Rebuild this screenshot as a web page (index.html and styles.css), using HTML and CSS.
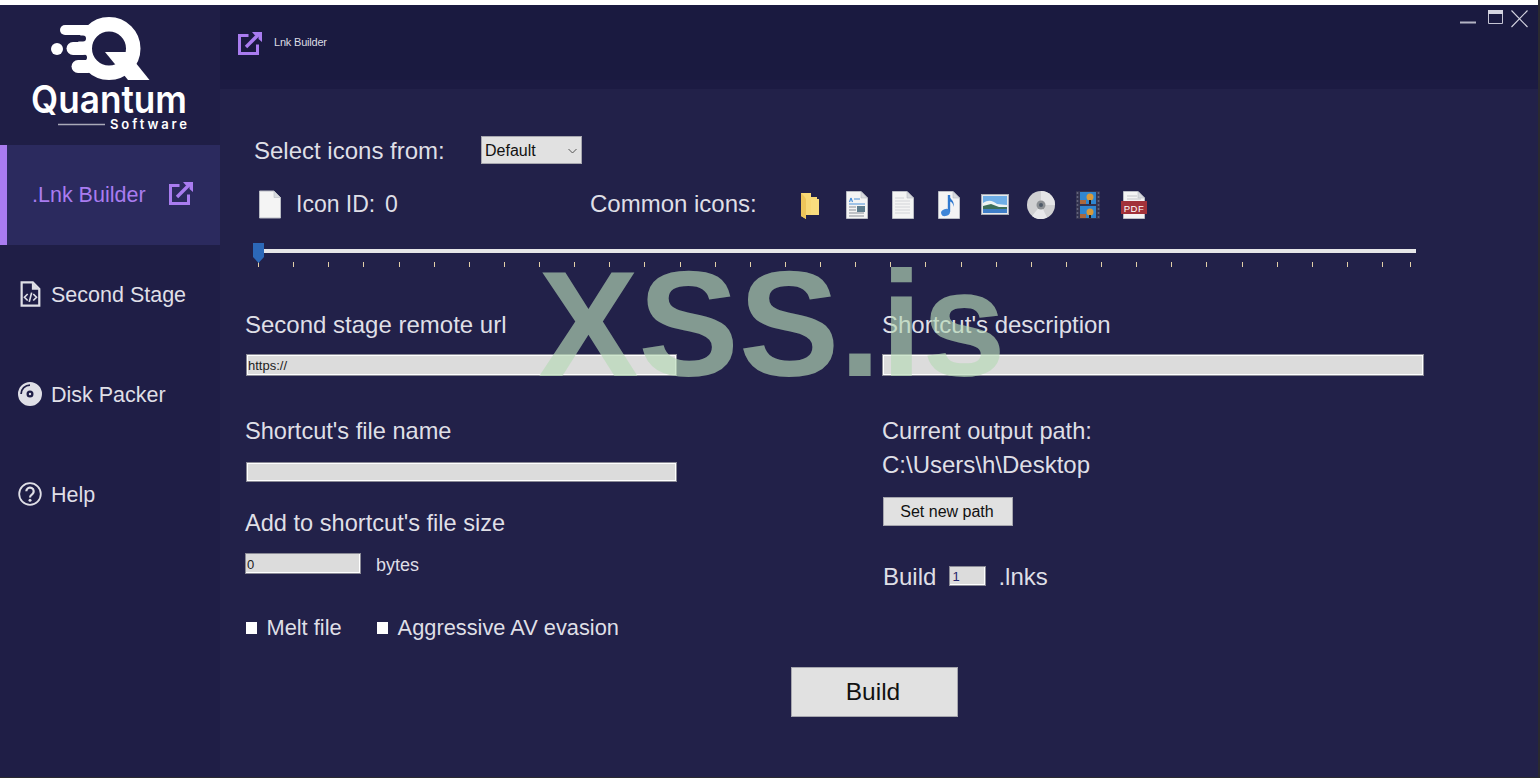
FILE: index.html
```html
<!DOCTYPE html>
<html lang="en">
<head>
<meta charset="utf-8">
<title>Quantum Software - Lnk Builder</title>
<link rel="stylesheet" href="styles.css">
</head>
<body>
<svg class="defs" width="0" height="0" aria-hidden="true">
  <symbol id="link" viewBox="0 0 24 24">
    <path d="M10.500 4.500H1.500V22.500H19.500V13.500" fill="none" stroke="currentColor" stroke-width="3"/>
    <path d="M8 16L21 3" fill="none" stroke="currentColor" stroke-width="3.400"/>
    <path d="M14 1H24V11L20.500 8V4.500H17Z" fill="currentColor"/>
  </symbol>
  <symbol id="page" viewBox="0 0 22 28">
    <path d="M.5.500H15L21.500 7V27.500H.5Z" fill="#f4f4f4" stroke="#b9bcc4"/>
    <path d="M15 .5V7H21.500Z" fill="#d8dade" stroke="#b9bcc4" stroke-width=".6"/>
  </symbol>
</svg>
<div class="window">
  <aside class="sidebar">
    <div class="logo">
      <svg width="220" height="140" viewBox="0 0 220 140">
        <circle cx="57" cy="44" r="6" fill="#fff"/>
        <circle cx="109" cy="43.500" r="24.250" fill="none" stroke="#fff" stroke-width="14.500"/>
        <path d="M105 47H127L149.500 75H128Z" fill="#fff"/>
        <g stroke="#1f1e46" stroke-width="6" stroke-linecap="round">
          <path d="M66 33.500H83"/>
          <path d="M66 52.500H84"/>
        </g>
        <g stroke="#fff" stroke-linecap="round">
          <path d="M65 25H88" stroke-width="10"/>
          <path d="M73 43.500H83" stroke-width="13"/>
          <path d="M78 61.500H88" stroke-width="13"/>
        </g>
        <text class="logo-name" x="31" y="108" textLength="156" lengthAdjust="spacingAndGlyphs">Quantum</text>
        <path d="M58 119.500H105" stroke="#a9a9b8" stroke-width="1.300"/>
        <text class="logo-sub" x="110" y="124" textLength="77">Software</text>
      </svg>
    </div>
    <nav class="nav">
      <a class="nav-item active">
        <span class="nav-label">.Lnk Builder</span>
        <svg class="nav-link-icon"><use href="#link"/></svg>
      </a>
      <a class="nav-item">
        <svg class="nav-icon" viewBox="0 0 24 28">
          <path d="M3 1.500H15L22 8.500V26.500H3Z" fill="none" stroke="currentColor" stroke-width="2.400"/>
          <path d="M14 1.500V9.500H22Z" fill="currentColor"/>
          <path d="M9.500 14L6 17.500L9.500 21M15.500 14L19 17.500L15.500 21M13.800 12.500L11.200 22.500" fill="none" stroke="currentColor" stroke-width="1.800"/>
        </svg>
        <span class="nav-text">Second Stage</span>
      </a>
      <a class="nav-item">
        <svg class="nav-icon" viewBox="0 0 24 24">
          <path fill-rule="evenodd" d="M12 0A12 12 0 1 1 12 24A12 12 0 1 1 12 0ZM12 8.500A3.500 3.500 0 1 0 12 15.500A3.500 3.500 0 1 0 12 8.500ZM12 10.800A1.200 1.200 0 1 1 12 13.200A1.200 1.200 0 1 1 12 10.800ZM4 12A8 8 0 0 1 12 4V2.200A9.800 9.800 0 0 0 2.200 12Z" fill="currentColor"/>
        </svg>
        <span class="nav-text">Disk Packer</span>
      </a>
      <a class="nav-item">
        <svg class="nav-icon" viewBox="0 0 24 24">
          <circle cx="12" cy="12" r="10.800" fill="none" stroke="currentColor" stroke-width="1.800"/>
          <path d="M8.300 9.300A3.700 3.700 0 1 1 14.200 12.300C12.800 13.300 12 13.800 12 15.500" fill="none" stroke="currentColor" stroke-width="2.200"/>
          <circle cx="12" cy="18.300" r="1.500" fill="currentColor"/>
        </svg>
        <span class="nav-text">Help</span>
      </a>
    </nav>
  </aside>
  <div class="content">
    <header class="header">
      <div class="titlebar">
        <svg class="title-icon"><use href="#link"/></svg>
        <span class="title-text">Lnk Builder</span>
        <div class="controls">
          <svg width="78" height="24" viewBox="0 0 78 24">
            <path d="M0 17.500H16" stroke="#b4b4c4" stroke-width="2"/>
            <path d="M28.500 5.500H42.500V18.500H28.500Z" fill="none" stroke="#c4c4d4"/>
            <path d="M28 5H43V9H28Z" fill="#d4d4e0"/>
            <path d="M51.500 5.500L67.500 22M67.500 5.500L51.500 22" stroke="#d4d4e0" stroke-width="1.100"/>
          </svg>
        </div>
      </div>
      <div class="header-strip"></div>
    </header>
    <main class="main">
      <div class="select-row">
        <span class="label select-label">Select icons from:</span>
        <div class="select-wrap">
          <select class="select"><option>Default</option></select>
          <svg class="chevron" width="9" height="6" viewBox="0 0 9 6"><path d="M.5 1L4.500 5L8.500 1" fill="none" stroke="#555" stroke-width="1"/></svg>
        </div>
      </div>
      <div class="icon-row">
        <svg class="current-icon"><use href="#page"/></svg>
        <span class="label id-label">Icon ID:</span>
        <span class="label id-value">0</span>
        <span class="label common-label">Common icons:</span>
        <div class="common-icons">
          <svg class="common folder" viewBox="0 0 28 28">
            <path d="M5 2H15V6H21V23H23V24H10V28L5 25Z" fill="#f8d876"/>
            <path d="M5 2V25L10 28V8L8 5Z" fill="#eec55a"/>
            <path d="M15 8H23V24H15Z" fill="#f9dc7e"/>
          </svg>
          <svg class="common" viewBox="0 0 28 28">
            <use href="#page" x="3" width="22" height="28"/>
            <path d="M8 7L6.500 11M8 7L9.500 11" stroke="#4a8fd8" stroke-width="1.200" fill="none"/>
            <path d="M11 8H17M6 13H22" stroke="#4a8fd8" stroke-width="1.200"/>
            <path d="M6 16H13M6 19H13M6 22H21M6 25H21" stroke="#8a8f98"/>
            <rect x="14" y="15" width="8" height="6" fill="#5e7d8e"/>
          </svg>
          <svg class="common" viewBox="0 0 28 28">
            <use href="#page" x="3" width="22" height="28"/>
            <path d="M6 7H15M6 10H21M6 13H21M6 16H21M6 19H21M6 22H21" stroke="#d2d4d8"/>
          </svg>
          <svg class="common" viewBox="0 0 28 28">
            <use href="#page" x="3" width="22" height="28"/>
            <path d="M14 4V21" stroke="#2f79cf" stroke-width="2.400"/>
            <ellipse cx="10.500" cy="21.500" rx="4.500" ry="3.500" fill="#3f86d8" transform="rotate(-20 10.500 21.500)"/>
            <path d="M14 4C15 9 20 9 18.500 16C18 11 16 11 14 10Z" fill="#2f79cf"/>
          </svg>
          <svg class="common" viewBox="0 0 28 28">
            <rect x=".5" y="3.500" width="27" height="20" fill="#e8e8ec" stroke="#a8acb4"/>
            <rect x="2" y="5" width="24" height="17" fill="#6faee6"/>
            <path d="M2 12C8 8 12 10 16 13L26 14V17H2Z" fill="#eef3f4"/>
            <path d="M2 15L10 13L18 16H26V18H2Z" fill="#3d6f5a"/>
            <rect x="2" y="18" width="24" height="4" fill="#3f7ec8"/>
          </svg>
          <svg class="common" viewBox="0 0 28 28">
            <circle cx="14" cy="14" r="14" fill="#d0d0d2"/>
            <path d="M14 0A14 14 0 0 1 28 14L14 14Z" fill="#e4e4e6"/>
            <path d="M14 14L5 25A14 14 0 0 0 20 26.600Z" fill="#e8e8ea"/>
            <circle cx="14" cy="14" r="4.500" fill="#8d9094"/>
            <circle cx="14" cy="14" r="2" fill="#4e5a68"/>
          </svg>
          <svg class="common" viewBox="0 0 28 28">
            <rect x="2" width="24" height="28" fill="#33334f"/>
            <path d="M3.500 1V28M24.500 1V28" stroke="#63637c" stroke-width="1.600" stroke-dasharray="2 2"/>
            <rect x="6" y="1" width="16" height="12" fill="#2f86d0"/>
            <rect x="6" y="15" width="16" height="12" fill="#2f86d0"/>
            <path d="M6 9H12V13H6ZM6 23H12V27H6Z" fill="#a9683e"/>
            <circle cx="16" cy="6" r="3.500" fill="#d89a3a"/>
            <circle cx="16" cy="21" r="3.500" fill="#d89a3a"/>
            <path d="M16 9V13M16 24V27" stroke="#221a1a" stroke-width="2"/>
          </svg>
          <svg class="common" viewBox="0 0 28 28">
            <use href="#page" x="3" width="22" height="28"/>
            <path d="M7 5H17M7 8H21" stroke="#c4c6ca"/>
            <rect x="1" y="10" width="26" height="13" fill="#a2323a"/>
            <text class="pdf" x="14" y="20.500">PDF</text>
          </svg>
        </div>
      </div>
      <div class="slider">
        <div class="track"></div>
        <div class="thumb"></div>
        <div class="ticks">
          <i></i><i></i><i></i><i></i><i></i><i></i><i></i><i></i><i></i><i></i><i></i><i></i><i></i><i></i><i></i><i></i><i></i>
          <i></i><i></i><i></i><i></i><i></i><i></i><i></i><i></i><i></i><i></i><i></i><i></i><i></i><i></i><i></i><i></i><i></i>
        </div>
      </div>
      <div class="form">
        <div class="col col-left">
          <label class="label">Second stage remote url</label>
          <input class="input field-a" type="text" value="https://">
          <label class="label gap-lg tight">Shortcut's file name</label>
          <input class="input field-b" type="text">
          <label class="label gap-md tight">Add to shortcut's file size</label>
          <div class="bytes-row">
            <input class="input bytes" type="text" value="0">
            <span class="small">bytes</span>
          </div>
          <div class="checks">
            <label class="check"><input class="box" type="checkbox"><span class="check-text">Melt file</span></label>
            <label class="check"><input class="box" type="checkbox"><span class="check-text">Aggressive AV evasion</span></label>
          </div>
        </div>
        <div class="col">
          <label class="label">Shortcut's description</label>
          <input class="input field-c" type="text">
          <span class="label gap-lg tight">Current output path:</span>
          <span class="label gap-sm">C:\Users\h\Desktop</span>
          <button class="btn path-btn" type="button">Set new path</button>
          <div class="count-row">
            <span class="label">Build</span>
            <input class="input count" type="text" value="1">
            <span class="label">.lnks</span>
          </div>
        </div>
      </div>
      <button class="btn build-btn" type="button">Build</button>
    </main>
  </div>
</div>
<div class="watermark">XSS.is</div>
</body>
</html>
```

FILE: styles.css
```css
* {
  box-sizing: border-box;
}

html,
body {
  margin: 0;
  height: 100%;
}

body {
  position: relative;
  overflow: hidden;
  background: #2a2a30;
  font-family: "Liberation Sans", Arial, sans-serif;
  color: #dfdfe6;
}

.defs {
  position: absolute;
}

.window {
  display: flex;
  width: 1538px;
  height: 777px;
  border-top: 5px solid #fff;
}

/* Sidebar */
.sidebar {
  flex: 0 0 220px;
  background: #1f1e46;
}

.logo {
  height: 140px;
}

.logo svg {
  display: block;
}

.logo-name {
  font-family: Inter, "Liberation Sans", sans-serif;
  font-size: 38px;
  font-weight: 600;
  fill: #fff;
}

.logo-sub {
  font-family: Inter, "Liberation Sans", sans-serif;
  font-size: 13px;
  font-weight: 600;
  fill: #fff;
}

.nav {
  display: flex;
  flex-direction: column;
}

.nav-item {
  display: flex;
  align-items: center;
  gap: 9px;
  height: 100px;
  padding: 0 0 3px 18px;
  font-size: 21.500px;
  color: #dfdfe6;
}

.nav-item.active {
  gap: 23px;
  padding-left: 25px;
  padding-bottom: 0;
  background: #2b2a5e;
  border-left: 7px solid #a97cf0;
  color: #a97cf0;
}

.nav-label {
  margin-top: 1px;
}

.nav-text {
  margin-top: 4px;
}

.nav-icon {
  flex: none;
  width: 24px;
  height: 26px;
}

.nav-link-icon {
  flex: none;
  width: 24px;
  height: 24px;
  margin-bottom: 4px;
}

/* Header */
.content {
  flex: 1;
  display: flex;
  flex-direction: column;
  min-width: 0;
  background: #222149;
}

.titlebar {
  display: flex;
  align-items: center;
  height: 75px;
  padding-left: 18px;
  background: #1a1a40;
}

.title-icon {
  width: 24px;
  height: 24px;
  color: #a97cf0;
}

.title-text {
  margin: 0 0 2px 12px;
  font-size: 11px;
  letter-spacing: -0.2px;
  color: #dcdce4;
}

.controls {
  align-self: flex-start;
  display: flex;
  margin-left: auto;
  line-height: 0;
}

.header-strip {
  height: 9px;
  background: #1c1b43;
}

/* Main form */
.main {
  flex: 1;
  display: flex;
  flex-direction: column;
  align-items: flex-start;
  padding-top: 47px;
}

.label {
  display: block;
  font-size: 24px;
  line-height: 26px;
  white-space: nowrap;
  color: #dfdfe6;
}

.label.tight {
  font-size: 23.600px;
}

.select-row {
  display: flex;
  align-items: center;
  padding-left: 34px;
}

.select-label {
  width: 227px;
  padding-top: 2px;
}

.select-wrap {
  position: relative;
  width: 101px;
  height: 28px;
}

.select {
  appearance: none;
  display: block;
  width: 100%;
  height: 100%;
  padding: 0 0 0 3px;
  border: 1px solid #a6a6ae;
  border-radius: 0;
  background: #e1e1e1;
  font: 16px "Liberation Sans", Arial, sans-serif;
  color: #111;
}

.chevron {
  position: absolute;
  top: 12px;
  right: 5px;
}

.icon-row {
  display: flex;
  align-items: center;
  height: 29px;
  margin-top: 26px;
  padding-left: 39px;
}

.current-icon {
  flex: none;
  width: 22px;
  height: 29px;
}

.id-label {
  margin: 0 0 2px 15px;
  width: 89px;
  font-size: 23px;
}

.id-value {
  width: 205px;
  margin-bottom: 2px;
  font-size: 23px;
}

.common-label {
  width: 206px;
  margin-bottom: 2px;
}

.common-icons {
  display: flex;
  gap: 18.100px;
  margin-left: 1px;
}

.common {
  flex: none;
  width: 28px;
  height: 28px;
}

.folder {
  margin: 0 1px 0 -1px;
}

.pdf {
  font-family: "Liberation Sans", sans-serif;
  font-size: 9.500px;
  letter-spacing: 0.5px;
  text-anchor: middle;
  fill: #fff;
}

/* Slider */
.slider {
  position: relative;
  width: 1163px;
  height: 24px;
  margin: 24px 0 0 33px;
}

.track {
  margin: 6px 0 0 5px;
  height: 4px;
  background: #e6e6e8;
}

.thumb {
  position: absolute;
  top: 0;
  left: 0;
  width: 11px;
  height: 20px;
  background: #2c68b8;
  clip-path: polygon(0 0, 100% 0, 100% 70%, 50% 100%, 0 70%);
}

.ticks {
  display: flex;
  margin: 9px 0 0 5px;
}

.ticks i {
  flex: 0 0 35.130px;
  height: 5px;
}

.ticks i::before {
  content: "";
  display: block;
  width: 1px;
  height: 100%;
  background: #e2cfa8;
}

.ticks i:last-child {
  margin-left: -7px;
}

/* Form columns */
.form {
  display: grid;
  grid-template-columns: 636px 542px;
  margin: 45px 0 0 26px;
}

.col {
  display: flex;
  flex-direction: column;
  align-items: flex-start;
}

.col-left > .label {
  margin-left: -1px;
}

.gap-lg {
  margin-top: 42px;
}

.gap-md {
  margin-top: 28px;
}

.gap-sm {
  margin-top: 8px;
}

.input {
  display: block;
  padding: 1px 1px 0;
  border: 1px solid #8a8a96;
  border-radius: 0;
  outline: 0;
  background: #dcdcdc;
  box-shadow: inset 0 0 0 1px #fff;
  font: 13px "Liberation Sans", Arial, sans-serif;
  color: #222;
}

.field-a {
  width: 431px;
  height: 22px;
  margin-top: 16px;
}

.field-b {
  width: 431px;
  height: 20px;
  margin-top: 18px;
}

.field-c {
  width: 542px;
  height: 22px;
  margin-top: 16px;
}

.bytes-row {
  display: flex;
  align-items: flex-start;
  height: 21px;
  margin-top: 17px;
}

.bytes {
  width: 116px;
  height: 21px;
  margin-left: -1px;
  box-shadow: inset -1px -1px 0 #fff;
}

.small {
  height: 21px;
  margin-left: 15px;
  font-size: 18px;
  line-height: 24px;
}

.checks {
  display: flex;
  gap: 35.500px;
  margin-top: 41px;
}

.check {
  display: flex;
  align-items: center;
  gap: 9.500px;
}

.check-text {
  font-size: 21.800px;
  line-height: 26px;
  white-space: nowrap;
  color: #dfdfe6;
}

.box {
  appearance: none;
  display: block;
  width: 11px;
  height: 12px;
  margin: 0;
  background: #fff;
}

.btn {
  display: block;
  padding: 0;
  border: 1px solid #a6a6ae;
  border-radius: 0;
  background: #e1e1e1;
  font-family: "Liberation Sans", Arial, sans-serif;
  color: #111;
}

.path-btn {
  width: 130px;
  height: 29px;
  margin: 19px 0 0 1px;
  padding-right: 2px;
  font-size: 16px;
}

.count-row {
  display: flex;
  align-items: center;
  margin-top: 38px;
  padding-left: 1px;
}

.count {
  width: 37px;
  height: 20px;
  margin: 0 12px 2px 13px;
  padding-left: 2px;
  box-shadow: inset -1px -1px 0 #fff;
  color: #24246a;
}

.build-btn {
  width: 167px;
  height: 50px;
  margin: 26px 0 0 571px;
  padding-right: 3px;
  font-size: 24.500px;
}

/* Watermark over the whole form */
.watermark {
  position: absolute;
  top: 249px;
  left: 538px;
  font-size: 151px;
  font-weight: 700;
  letter-spacing: -0.4px;
  line-height: 150px;
  white-space: nowrap;
  color: rgba(182, 217, 182, 0.66);
  pointer-events: none;
}
```
